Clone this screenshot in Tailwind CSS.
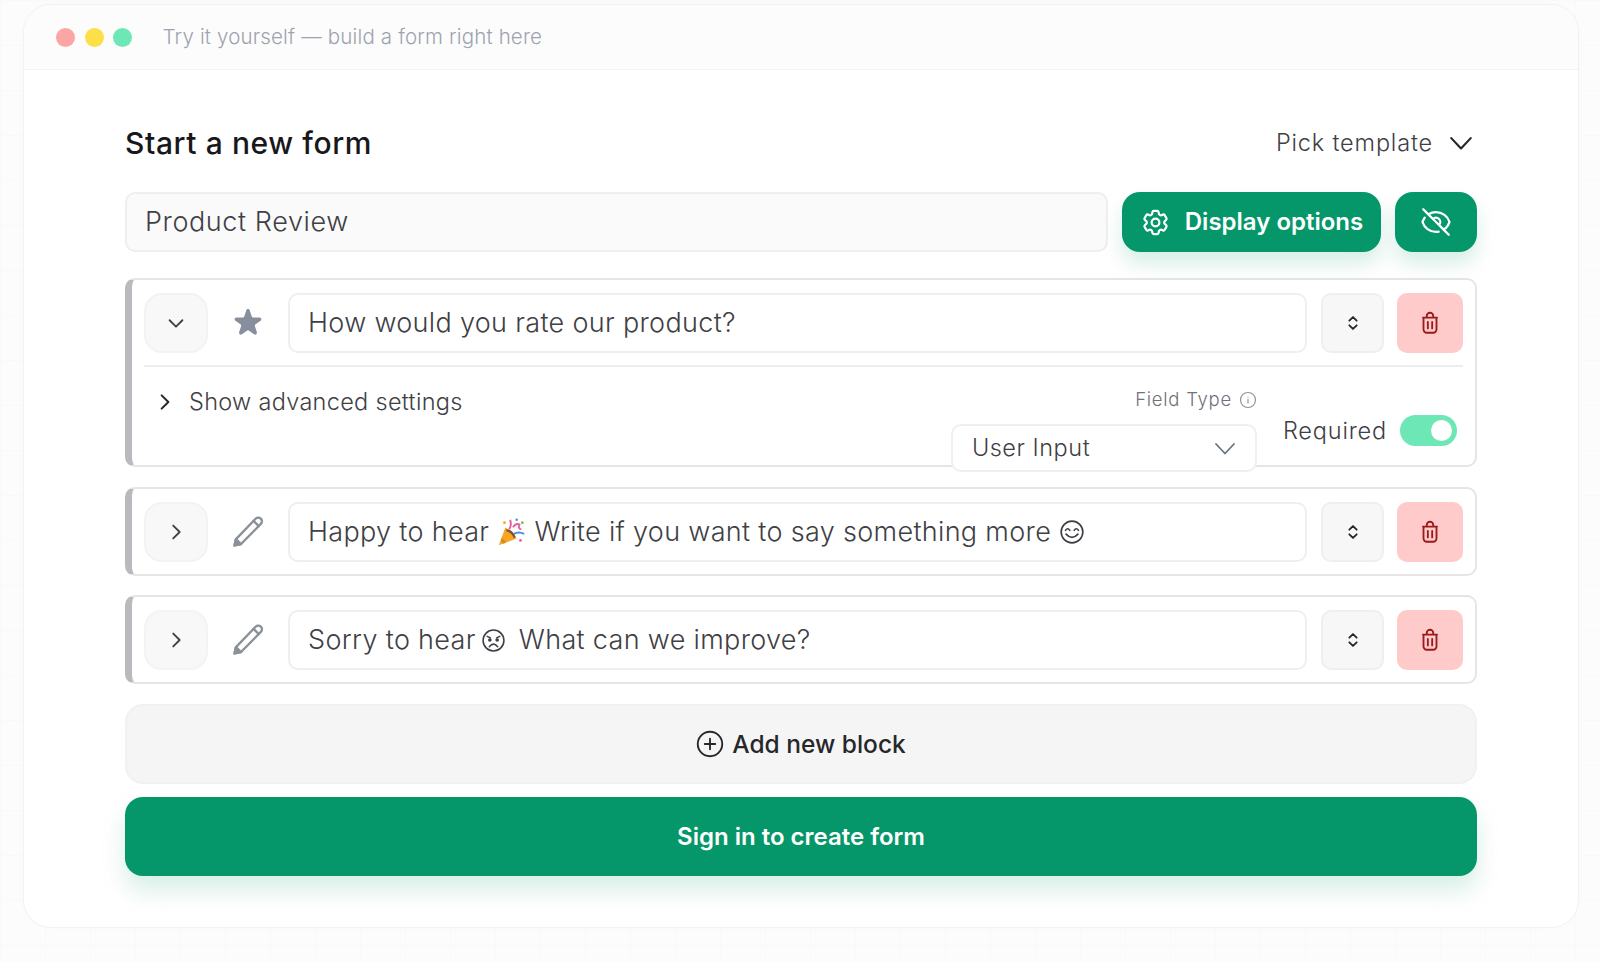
<!DOCTYPE html>
<html lang="en">
<head>
    <meta charset="UTF-8">
    <title>Try it yourself</title>
    <script src="https://cdn.jsdelivr.net/npm/@tailwindcss/browser@4"></script>
</head>
<body class="bg-[#fcfcfc] font-['Inter',sans-serif] text-[#27272a] overflow-hidden">
    <div class="h-[962px] pt-[4px] pl-[23px] bg-[linear-gradient(#f9f9f9_1px,transparent_1px),linear-gradient(90deg,#f9f9f9_1px,transparent_1px)] bg-[size:45px_45px]">
        <!-- Window -->
        <div class="w-[1556px] h-[924px] bg-white border border-[#f2f2f2] rounded-[28px] shadow-[0_0_12px_rgba(0,0,0,0.01)]">
            <div class="h-[65px] flex items-center gap-[9.500px] pl-[32px] border-b border-[#f3f3f3] bg-[#fcfcfc] rounded-t-[28px]">
                <span class="w-[19px] h-[19px] rounded-full bg-[#fca5a5]"></span>
                <span class="w-[19px] h-[19px] rounded-full bg-[#fde047]"></span>
                <span class="w-[19px] h-[19px] rounded-full bg-[#6ee7b7]"></span>
                <span class="ml-[21px] text-[20.5px] font-light text-[#9ca3af] tracking-[0.008em]">Try it yourself — build a form right here</span>
            </div>

            <div class="pt-[49px] px-[101px]">
                <div class="h-[48px] flex items-center justify-between">
                    <h1 class="text-[30px] font-medium text-[#18181b] tracking-[0.02em]">Start a new form</h1>
                    <div class="flex items-center gap-[15px] pr-[3px]">
                        <span class="text-[23.5px] font-light text-[#3f3f46] tracking-[0.035em]">Pick template</span>
                        <svg class="w-[26px] h-[26px] text-[#27272a]" viewBox="0 0 24 24" fill="none" stroke="currentColor" stroke-width="2" stroke-linecap="round" stroke-linejoin="round"><path d="M3 7.5l9 9.5 9-9.5"/></svg>
                    </div>
                </div>

                <div class="mt-[25px] h-[60px] flex gap-[14px]">
                    <div class="flex-1 flex items-center pl-[18px] bg-[#fafafa] border-2 border-[#efefef] rounded-[10px] text-[27px] font-light text-[#3f3f46] tracking-[0.022em]">Product Review</div>
                    <button class="w-[259px] flex items-center justify-center gap-[14px] bg-[#059669] text-white rounded-[18px] text-[24px] font-semibold shadow-[0_12px_20px_rgba(5,150,105,0.16)]">
                        <svg class="w-[31px] h-[31px]" viewBox="0 0 24 24" fill="none" stroke="currentColor" stroke-width="1.7" stroke-linecap="round" stroke-linejoin="round"><path d="M9.594 3.94c.09-.542.56-.94 1.11-.94h2.593c.55 0 1.02.398 1.11.94l.213 1.281c.063.374.313.686.645.87.074.04.147.083.22.127.325.196.72.257 1.075.124l1.217-.456a1.125 1.125 0 0 1 1.37.49l1.296 2.247a1.125 1.125 0 0 1-.26 1.431l-1.003.827c-.293.241-.438.613-.43.992a7.723 7.723 0 0 1 0 .255c-.008.378.137.75.43.991l1.004.827c.424.35.534.955.26 1.43l-1.298 2.247a1.125 1.125 0 0 1-1.369.491l-1.217-.456c-.355-.133-.75-.072-1.076.124a6.47 6.47 0 0 1-.22.128c-.331.183-.581.495-.644.869l-.213 1.281c-.09.543-.56.94-1.11.94h-2.594c-.55 0-1.019-.398-1.11-.94l-.213-1.281c-.062-.374-.312-.686-.644-.87a6.52 6.52 0 0 1-.22-.127c-.325-.196-.72-.257-1.076-.124l-1.217.456a1.125 1.125 0 0 1-1.369-.49l-1.297-2.247a1.125 1.125 0 0 1 .26-1.431l1.004-.827c.292-.24.437-.613.43-.991a6.932 6.932 0 0 1 0-.255c.007-.38-.138-.751-.43-.992l-1.004-.827a1.125 1.125 0 0 1-.26-1.43l1.297-2.247a1.125 1.125 0 0 1 1.37-.491l1.216.456c.356.133.751.072 1.076-.124.072-.044.146-.086.22-.128.332-.183.582-.495.644-.869l.214-1.28Z"/><path d="M15 12a3 3 0 1 1-6 0 3 3 0 0 1 6 0Z"/></svg>
                        Display options
                    </button>
                    <button class="w-[82px] flex items-center justify-center bg-[#059669] text-white rounded-[18px] shadow-[0_12px_20px_rgba(5,150,105,0.16)]">
                        <svg class="w-[34px] h-[34px]" viewBox="0 0 24 24" fill="none" stroke="currentColor" stroke-width="1.6" stroke-linecap="round" stroke-linejoin="round"><path d="M13.875 18.825A10.05 10.05 0 0112 19c-4.478 0-8.268-2.943-9.543-7a9.97 9.97 0 011.563-3.029m5.858.908a3 3 0 114.243 4.243M9.878 9.878l4.242 4.242M9.88 9.88l-3.29-3.29m7.532 7.532l3.29 3.29M3 3l3.59 3.59m0 0A9.953 9.953 0 0112 5c4.478 0 8.268 2.943 9.543 7a10.025 10.025 0 01-4.132 5.411m0 0L21 21"/></svg>
                    </button>
                </div>

                <!-- Block 1 -->
                <div class="mt-[26px] h-[189px] border-2 border-l-[7px] border-[#e5e5e5] border-l-[#b8babd] rounded-[10px] pt-[13px] pl-[12px] pr-[12px]">
                    <div class="h-[60px] flex">
                        <button class="w-[64px] flex items-center justify-center bg-[#f8f8f8] border-2 border-[#f3f3f3] rounded-[18px]">
                            <svg class="w-[22px] h-[22px] text-[#3f3f46]" viewBox="0 0 24 24" fill="none" stroke="currentColor" stroke-width="2" stroke-linecap="round" stroke-linejoin="round"><path d="M5 9l7 7 7-7"/></svg>
                        </button>
                        <div class="w-[80px] flex items-center justify-center">
                            <svg class="w-[36px] h-[36px] text-[#878e9e]" viewBox="0 0 20 20" fill="currentColor"><path d="M9.049 2.927c.3-.921 1.603-.921 1.902 0l1.07 3.292a1 1 0 00.95.69h3.462c.969 0 1.371 1.24.588 1.81l-2.8 2.034a1 1 0 00-.364 1.118l1.07 3.292c.3.921-.755 1.688-1.54 1.118l-2.8-2.034a1 1 0 00-1.175 0l-2.8 2.034c-.784.57-1.838-.197-1.539-1.118l1.07-3.292a1 1 0 00-.364-1.118L2.98 8.72c-.783-.57-.38-1.81.588-1.81h3.461a1 1 0 00.951-.69l1.07-3.292z"/></svg>
                        </div>
                        <div class="flex-1 flex items-center pl-[18px] bg-white border-2 border-[#efefef] rounded-[10px] text-[27px] font-light text-[#3f3f46] tracking-[0.012em]">How would you rate our product?</div>
                        <button class="ml-[14px] w-[63px] flex items-center justify-center bg-[#f7f7f7] border-2 border-[#efefef] rounded-[10px]">
                            <svg class="w-[22px] h-[22px] text-[#27272a]" viewBox="0 0 24 24" fill="none" stroke="currentColor" stroke-width="2" stroke-linecap="round" stroke-linejoin="round"><path d="M8 9.5l4-4 4 4M16 14.5l-4 4-4-4"/></svg>
                        </button>
                        <button class="ml-[13px] w-[66px] flex items-center justify-center bg-[#fecaca] rounded-[10px]">
                            <svg class="w-[26px] h-[26px] text-[#991b1b]" viewBox="0 0 24 24" fill="none" stroke="currentColor" stroke-width="1.7" stroke-linecap="round" stroke-linejoin="round"><path d="M5.5 7h13M9 7V5.5a3 3 0 016 0V7M6 7v11a3 3 0 003 3h6a3 3 0 003-3V7M10 11v6M14 11v6"/></svg>
                        </button>
                    </div>
                    <div class="mt-[12px] border-t-2 border-[#ededed] flex">
                        <div class="flex-1 pt-[20px] pl-[11px] flex items-start gap-[14px]">
                            <svg class="mt-[5px] w-[20px] h-[20px] text-[#27272a]" viewBox="0 0 24 24" fill="none" stroke="currentColor" stroke-width="2.4" stroke-linecap="round" stroke-linejoin="round"><path d="M8 4l8 8-8 8"/></svg>
                            <span class="text-[23.5px] leading-[30px] font-light text-[#3f3f46] tracking-[0.013em]">Show advanced settings</span>
                        </div>
                        <div class="w-[306px] relative pt-[23px] -mb-[7px]">
                            <div class="h-[20px] flex items-center justify-end gap-[7px] text-[18.5px] font-light text-[#71717a] tracking-[0.04em]">
                                Field Type
                                <svg class="w-[18px] h-[18px] text-[#8f949c]" viewBox="0 0 24 24" fill="none" stroke="currentColor" stroke-width="1.6" stroke-linecap="round"><circle cx="12" cy="12" r="10"/><path d="M12 11v5M12 8v.1"/></svg>
                            </div>
                            <div class="mt-[14px] h-[48px] flex items-center justify-between pl-[19px] pr-[18px] bg-white border-2 border-[#efefef] rounded-[10px] text-[23.5px] font-light text-[#3f3f46] tracking-[0.022em]">
                                User Input
                                <svg class="w-[24px] h-[24px] text-[#6b7280]" viewBox="0 0 24 24" fill="none" stroke="currentColor" stroke-width="1.8" stroke-linecap="round" stroke-linejoin="round"><path d="M3 8l9 9.5L21 8"/></svg>
                            </div>
                        </div>
                        <div class="ml-[26px] mr-[6px] pt-[48px] flex items-start gap-[13px]">
                            <span class="text-[23.5px] leading-[31px] font-light text-[#3f3f46] tracking-[0.035em]">Required</span>
                            <span class="w-[57px] h-[31px] flex items-center justify-end pr-[5px] bg-[#6ee7b7] rounded-full">
                                <span class="w-[21px] h-[21px] rounded-full bg-white"></span>
                            </span>
                        </div>
                    </div>
                </div>

                <!-- Block 2 -->
                <div class="mt-[20px] h-[89px] border-2 border-l-[7px] border-[#e5e5e5] border-l-[#b8babd] rounded-[10px] pt-[13px] pl-[12px] pr-[12px]">
                    <div class="h-[60px] flex">
                        <button class="w-[64px] flex items-center justify-center bg-[#f8f8f8] border-2 border-[#f3f3f3] rounded-[18px]">
                            <svg class="w-[22px] h-[22px] text-[#3f3f46]" viewBox="0 0 24 24" fill="none" stroke="currentColor" stroke-width="2" stroke-linecap="round" stroke-linejoin="round"><path d="M9 5l7 7-7 7"/></svg>
                        </button>
                        <div class="w-[80px] flex items-center justify-center">
                            <svg class="w-[38px] h-[38px] text-[#8b9099]" viewBox="0 0 24 24" fill="none" stroke="currentColor" stroke-width="1.5" stroke-linejoin="round" stroke-linecap="round"><path d="M3.5 20.5l.9-4L16.8 3.6a2.3 2.3 0 013.3 0 2.3 2.3 0 010 3.3L7.6 19.6z"/><path d="M3.5 20.5l.9-4 3.2 3.1z" fill="currentColor"/><path d="M15.5 5l3.3 3.3"/></svg>
                        </div>
                        <div class="flex-1 flex items-center pl-[18px] bg-white border-2 border-[#efefef] rounded-[10px] text-[27px] font-light text-[#3f3f46] tracking-[0.012em]">
                            Happy to hear
                            <svg class="w-[30px] h-[30px] ml-[8px] mr-[7px]" viewBox="0 0 32 32"><path d="M2 30l7-19 12 12z" fill="#f5a623"/><path d="M5 22l5 5-3 1.5-3-3z" fill="#e2861a"/><path d="M10 14q6 1 9 8" fill="none" stroke="#8a4b2a" stroke-width="2.5"/><path d="M13 13q3-5 1-10" fill="none" stroke="#e85d9a" stroke-width="2"/><path d="M18 18q5-3 11 0" fill="none" stroke="#4a90d9" stroke-width="2"/><path d="M17 11q3-5 7-3-2 5 2 5" fill="none" stroke="#e85d9a" stroke-width="2"/><circle cx="8" cy="6" r="1.5" fill="#f5a623"/><circle cx="27" cy="6" r="1.5" fill="#7ac143"/><circle cx="25" cy="25" r="1.5" fill="#e85d9a"/><circle cx="21" cy="3" r="1.3" fill="#4a90d9"/></svg>
                            Write if you want to say something more
                            <svg class="w-[26px] h-[26px] ml-[8px]" viewBox="0 0 24 24" fill="none" stroke="#3f3f46" stroke-width="1.5" stroke-linecap="round"><circle cx="12" cy="12" r="10"/><path d="M6 10.5q2-3 4 0M14 10.5q2-3 4 0"/><path d="M6.5 14q5.5 6 11 0"/></svg>
                        </div>
                        <button class="ml-[14px] w-[63px] flex items-center justify-center bg-[#f7f7f7] border-2 border-[#efefef] rounded-[10px]">
                            <svg class="w-[22px] h-[22px] text-[#27272a]" viewBox="0 0 24 24" fill="none" stroke="currentColor" stroke-width="2" stroke-linecap="round" stroke-linejoin="round"><path d="M8 9.5l4-4 4 4M16 14.5l-4 4-4-4"/></svg>
                        </button>
                        <button class="ml-[13px] w-[66px] flex items-center justify-center bg-[#fecaca] rounded-[10px]">
                            <svg class="w-[26px] h-[26px] text-[#991b1b]" viewBox="0 0 24 24" fill="none" stroke="currentColor" stroke-width="1.7" stroke-linecap="round" stroke-linejoin="round"><path d="M5.5 7h13M9 7V5.5a3 3 0 016 0V7M6 7v11a3 3 0 003 3h6a3 3 0 003-3V7M10 11v6M14 11v6"/></svg>
                        </button>
                    </div>
                </div>

                <!-- Block 3 -->
                <div class="mt-[19px] h-[89px] border-2 border-l-[7px] border-[#e5e5e5] border-l-[#b8babd] rounded-[10px] pt-[13px] pl-[12px] pr-[12px]">
                    <div class="h-[60px] flex">
                        <button class="w-[64px] flex items-center justify-center bg-[#f8f8f8] border-2 border-[#f3f3f3] rounded-[18px]">
                            <svg class="w-[22px] h-[22px] text-[#3f3f46]" viewBox="0 0 24 24" fill="none" stroke="currentColor" stroke-width="2" stroke-linecap="round" stroke-linejoin="round"><path d="M9 5l7 7-7 7"/></svg>
                        </button>
                        <div class="w-[80px] flex items-center justify-center">
                            <svg class="w-[38px] h-[38px] text-[#8b9099]" viewBox="0 0 24 24" fill="none" stroke="currentColor" stroke-width="1.5" stroke-linejoin="round" stroke-linecap="round"><path d="M3.5 20.5l.9-4L16.8 3.6a2.3 2.3 0 013.3 0 2.3 2.3 0 010 3.3L7.6 19.6z"/><path d="M3.5 20.5l.9-4 3.2 3.1z" fill="currentColor"/><path d="M15.5 5l3.3 3.3"/></svg>
                        </div>
                        <div class="flex-1 flex items-center pl-[18px] bg-white border-2 border-[#efefef] rounded-[10px] text-[27px] font-light text-[#3f3f46] tracking-[0.012em]">
                            Sorry to hear
                            <svg class="w-[25px] h-[25px] ml-[5px] mr-[13px]" viewBox="0 0 24 24" fill="none" stroke="#3f3f46" stroke-width="1.5" stroke-linecap="round"><circle cx="12" cy="12" r="10"/><path d="M6 8l3 1.5M18 8l-3 1.5"/><circle cx="8.5" cy="11.5" r="1" fill="#3f3f46"/><circle cx="15.5" cy="11.5" r="1" fill="#3f3f46"/><path d="M8 18q4-5 8 0"/></svg>
                            What can we improve?
                        </div>
                        <button class="ml-[14px] w-[63px] flex items-center justify-center bg-[#f7f7f7] border-2 border-[#efefef] rounded-[10px]">
                            <svg class="w-[22px] h-[22px] text-[#27272a]" viewBox="0 0 24 24" fill="none" stroke="currentColor" stroke-width="2" stroke-linecap="round" stroke-linejoin="round"><path d="M8 9.5l4-4 4 4M16 14.5l-4 4-4-4"/></svg>
                        </button>
                        <button class="ml-[13px] w-[66px] flex items-center justify-center bg-[#fecaca] rounded-[10px]">
                            <svg class="w-[26px] h-[26px] text-[#991b1b]" viewBox="0 0 24 24" fill="none" stroke="currentColor" stroke-width="1.7" stroke-linecap="round" stroke-linejoin="round"><path d="M5.5 7h13M9 7V5.5a3 3 0 016 0V7M6 7v11a3 3 0 003 3h6a3 3 0 003-3V7M10 11v6M14 11v6"/></svg>
                        </button>
                    </div>
                </div>

                <button class="mt-[20px] w-full h-[80px] flex items-center justify-center gap-[8px] bg-[#f5f5f6] border-2 border-[#f1f1f1] rounded-[18px] text-[24.5px] font-medium text-[#27272a]">
                    <svg class="w-[28px] h-[28px]" viewBox="0 0 24 24" fill="none" stroke="currentColor" stroke-width="1.6" stroke-linecap="round"><circle cx="12" cy="12" r="10.5"/><path d="M12 7.5v9M7.5 12h9"/></svg>
                    Add new block
                </button>
                <button class="mt-[13px] w-full h-[79px] flex items-center justify-center bg-[#059669] text-white rounded-[18px] text-[24px] font-semibold shadow-[0_14px_24px_rgba(5,150,105,0.16)]">Sign in to create form</button>
            </div>
        </div>
    </div>
</body>
</html>
